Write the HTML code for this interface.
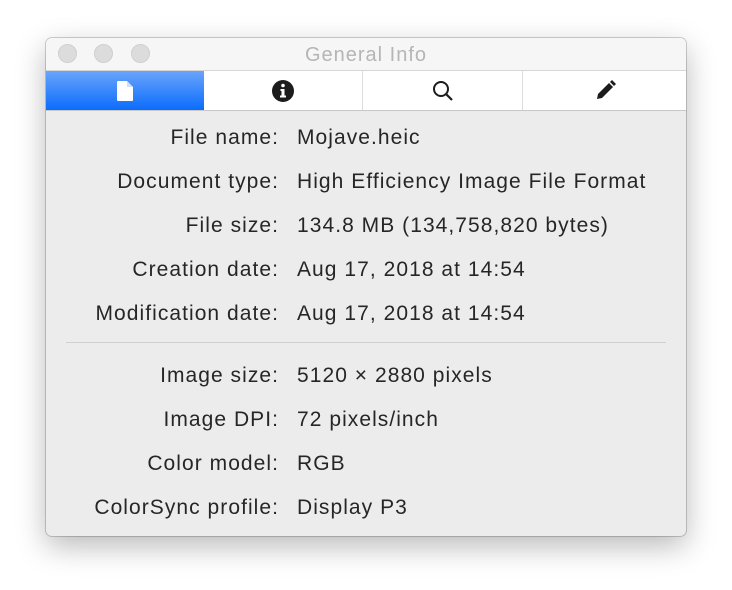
<!DOCTYPE html>
<html><head><style>
body{margin:0;width:732px;height:590px;background:#fff;font-family:"Liberation Sans",sans-serif;position:relative;overflow:hidden}
.win{position:absolute;left:46px;top:38px;width:640px;height:498px;background:#ececec;border-radius:6px;box-shadow:0 10px 30px rgba(0,0,0,.28),0 0 0 1px rgba(0,0,0,.18);overflow:hidden}
.title{height:32px;background:#f6f6f6;border-bottom:1px solid #d6d6d6;position:relative}
.title .t{position:absolute;left:0;right:0;top:6px;text-align:center;color:#b5b5b5;font-size:20px;letter-spacing:1px}
.dot{position:absolute;top:6px;width:19px;height:19px;border-radius:50%;background:#dcdcdc;border:1px solid #cfcfcf;box-sizing:border-box}
.tabs{position:absolute;top:33px;left:0;right:0;height:39px;background:#fff;border-bottom:1px solid #c8c8c8;display:flex}
.tab{flex:0 0 auto;height:39px;display:flex;align-items:center;justify-content:center;border-right:1px solid #ddd;box-sizing:border-box}
.row{position:absolute;left:0;right:0;font-size:21px;letter-spacing:1.05px;color:#262626;height:24px}
.row .l{position:absolute;right:407px;text-align:right;white-space:nowrap}
.row .v{position:absolute;left:251px;white-space:nowrap}
.sep{position:absolute;left:20px;right:20px;top:304px;height:1px;background:#d0d0d0}
</style></head><body>
<div class="win">
<div class="title"><div class="dot" style="left:12px"></div><div class="dot" style="left:48px"></div><div class="dot" style="left:85px"></div><div class="t">General Info</div></div>
<div class="tabs">
<div class="tab" style="width:158px;background:linear-gradient(#69a4fb,#0b6cfc);border-right:none"><svg width="16" height="20" viewBox="0 0 16 20"><path d="M1 0h9l6 6v13a1 1 0 0 1-1 1H1a1 1 0 0 1-1-1V1a1 1 0 0 1 1-1z" fill="#fff"/><path d="M10 0v6h6" fill="#cfe0fd"/></svg></div>
<div class="tab" style="width:159px"><svg width="24" height="24" viewBox="0 0 24 24"><circle cx="12" cy="12" r="11" fill="#1c1c1c"/><circle cx="12" cy="6.5" r="1.8" fill="#fff"/><path d="M9.5 10h4v6.5h1.5v2h-6v-2h1.5v-4.5h-1z" fill="#fff"/></svg></div>
<div class="tab" style="width:160px"><svg width="24" height="24" viewBox="0 0 24 24"><circle cx="10" cy="10" r="7" fill="none" stroke="#1c1c1c" stroke-width="2"/><path d="M15 15l6 6" stroke="#1c1c1c" stroke-width="2.2"/></svg></div>
<div class="tab" style="flex:1;border-right:none"><svg width="24" height="24" viewBox="0 0 24 24"><path d="M4 20l1-5L16 4l4 4L9 19z" fill="#1c1c1c"/><path d="M17 3l2-2 4 4-2 2z" fill="#1c1c1c"/></svg></div>
</div>
<div class="row" style="top:88px"><span class="l">File name:</span><span class="v">Mojave.heic</span></div>
<div class="row" style="top:132px"><span class="l">Document type:</span><span class="v">High Efficiency Image File Format</span></div>
<div class="row" style="top:176px"><span class="l">File size:</span><span class="v">134.8 MB (134,758,820 bytes)</span></div>
<div class="row" style="top:220px"><span class="l">Creation date:</span><span class="v">Aug 17, 2018 at 14:54</span></div>
<div class="row" style="top:264px"><span class="l">Modification date:</span><span class="v">Aug 17, 2018 at 14:54</span></div>
<div class="sep"></div>
<div class="row" style="top:326px"><span class="l">Image size:</span><span class="v">5120 × 2880 pixels</span></div>
<div class="row" style="top:370px"><span class="l">Image DPI:</span><span class="v">72 pixels/inch</span></div>
<div class="row" style="top:414px"><span class="l">Color model:</span><span class="v">RGB</span></div>
<div class="row" style="top:458px"><span class="l">ColorSync profile:</span><span class="v">Display P3</span></div>
</div>
</body></html>
